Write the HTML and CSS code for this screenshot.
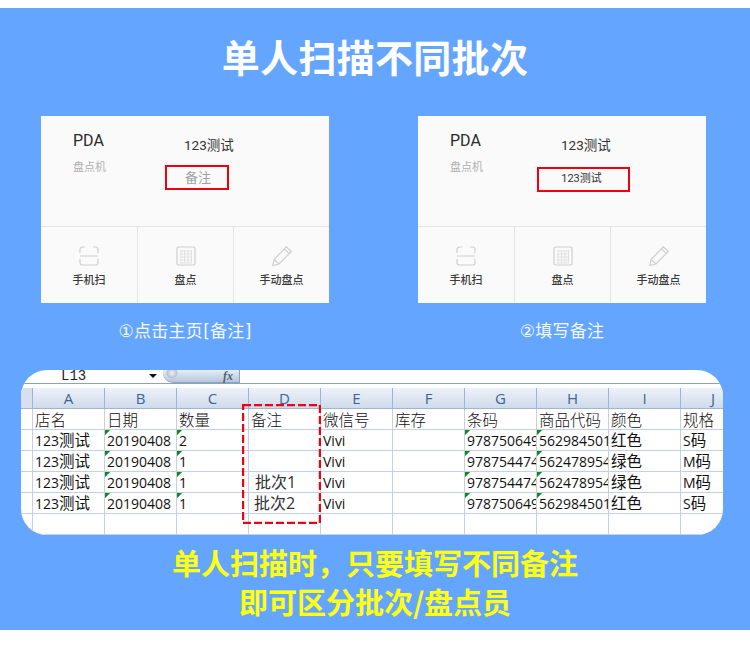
FILE: index.html
```html
<!DOCTYPE html>
<html lang="zh-CN">
<head>
<meta charset="utf-8">
<title>单人扫描不同批次</title>
<link rel="stylesheet" href="styles.css">
</head>
<body>
<main class="poster">
  <h1 class="title">单人扫描不同批次</h1>
  <div class="steps">
    <section class="step">
      <div class="card">
        <div class="card-top">
          <div class="brand"><div class="brand-name">PDA</div><div class="brand-sub">盘点机</div></div>
          <div class="info">
            <div class="store">123测试</div>
            <div class="note note-empty">备注</div>
          </div>
        </div>
        <div class="actions">
          <div class="action">
            <svg class="icon" viewBox="0 0 20 20"><path d="M1 7V3.500A2.500 2.500 0 0 1 3.500 1H6M14 1h2.500A2.500 2.500 0 0 1 19 3.500V7M1 10h18M1 13v3.500A2.500 2.500 0 0 0 3.500 19H16.500A2.500 2.500 0 0 0 19 16.500V13"/></svg>
            <span class="action-label">手机扫</span>
          </div>
          <div class="action">
            <svg class="icon" viewBox="0 0 20 20"><rect x="1" y="1" width="18" height="18" rx="1.500"/><path class="thin" d="M4 5h12M4 8h12M4 11h12M4 14h12M4 17h12M5 4v13M8.500 4v13M12 4v13M15.500 4v13"/></svg>
            <span class="action-label">盘点</span>
          </div>
          <div class="action">
            <svg class="icon" viewBox="0 0 20 20"><path d="M0.800 19.500l1.300-6L14.300 0.800l5 4.700L7 18zM2.100 13.500l4.900 4.500M12.300 2.900l5 4.700"/></svg>
            <span class="action-label">手动盘点</span>
          </div>
        </div>
      </div>
      <p class="caption">①点击主页[备注]</p>
    </section>
    <section class="step">
      <div class="card">
        <div class="card-top">
          <div class="brand"><div class="brand-name">PDA</div><div class="brand-sub">盘点机</div></div>
          <div class="info">
            <div class="store">123测试</div>
            <div class="note note-filled">123测试</div>
          </div>
        </div>
        <div class="actions">
          <div class="action">
            <svg class="icon" viewBox="0 0 20 20"><path d="M1 7V3.500A2.500 2.500 0 0 1 3.500 1H6M14 1h2.500A2.500 2.500 0 0 1 19 3.500V7M1 10h18M1 13v3.500A2.500 2.500 0 0 0 3.500 19H16.500A2.500 2.500 0 0 0 19 16.500V13"/></svg>
            <span class="action-label">手机扫</span>
          </div>
          <div class="action">
            <svg class="icon" viewBox="0 0 20 20"><rect x="1" y="1" width="18" height="18" rx="1.500"/><path class="thin" d="M4 5h12M4 8h12M4 11h12M4 14h12M4 17h12M5 4v13M8.500 4v13M12 4v13M15.500 4v13"/></svg>
            <span class="action-label">盘点</span>
          </div>
          <div class="action">
            <svg class="icon" viewBox="0 0 20 20"><path d="M0.800 19.500l1.300-6L14.300 0.800l5 4.700L7 18zM2.100 13.500l4.900 4.500M12.300 2.900l5 4.700"/></svg>
            <span class="action-label">手动盘点</span>
          </div>
        </div>
      </div>
      <p class="caption">②填写备注</p>
    </section>
  </div>

  <div class="sheet">
    <div class="formula">
      <span class="cell-name">L13</span>
      <span class="drop"></span>
      <span class="fx-btn"><i>fx</i></span>
    </div>
    <table class="grid">
      <thead>
        <tr><th class="corner"></th><th>A</th><th>B</th><th>C</th><th>D</th><th>E</th><th>F</th><th>G</th><th>H</th><th>I</th><th class="last">J</th></tr>
      </thead>
      <tbody>
        <tr class="head-row"><td class="rh"></td><td>店名</td><td>日期</td><td>数量</td><td>备注</td><td>微信号</td><td>库存</td><td>条码</td><td>商品代码</td><td>颜色</td><td>规格</td></tr>
        <tr><td class="rh"></td><td>123<span class="cjk">测试</span></td><td class="mark">20190408</td><td class="mark">2</td><td></td><td>Vivi</td><td></td><td class="mark">978750649</td><td class="mark">562984501</td><td><span class="cjk">红色</span></td><td>S<span class="cjk">码</span></td></tr>
        <tr><td class="rh"></td><td>123<span class="cjk">测试</span></td><td class="mark">20190408</td><td class="mark">1</td><td></td><td>Vivi</td><td></td><td class="mark">978754474</td><td class="mark">562478954</td><td><span class="cjk">绿色</span></td><td>M<span class="cjk">码</span></td></tr>
        <tr><td class="rh"></td><td>123<span class="cjk">测试</span></td><td class="mark">20190408</td><td class="mark">1</td><td class="batch">批次1</td><td>Vivi</td><td></td><td class="mark">978754474</td><td class="mark">562478954</td><td><span class="cjk">绿色</span></td><td>M<span class="cjk">码</span></td></tr>
        <tr><td class="rh"></td><td>123<span class="cjk">测试</span></td><td class="mark">20190408</td><td class="mark">1</td><td class="batch batch-b">批次2</td><td>Vivi</td><td></td><td class="mark">978750649</td><td class="mark">562984501</td><td><span class="cjk">红色</span></td><td>S<span class="cjk">码</span></td></tr>
        <tr><td class="rh"></td><td></td><td></td><td></td><td></td><td></td><td></td><td></td><td></td><td></td><td></td></tr>
        <tr class="short"><td class="rh"></td><td></td><td></td><td></td><td></td><td></td><td></td><td></td><td></td><td></td><td></td></tr>
      </tbody>
    </table>
    <svg class="dash" viewBox="0 0 79 120"><rect x="1" y="1" width="77" height="118"/></svg>
  </div>

  <div class="foot">
    <p>单人扫描时，只要填写不同备注</p>
    <p>即可区分批次/盘点员</p>
  </div>
</main>
</body>
</html>
```

FILE: styles.css
```css
* { box-sizing: border-box; }
html, body { margin: 0; padding: 0; background: #fff; }
body {
  padding: 8px 0 25px;
  font-family: "Noto Sans CJK SC", "Liberation Sans", sans-serif;
}
.poster {
  height: 622px;
  background: #64a6ff;
  padding-top: 22px;
  overflow: hidden;
}
.title {
  margin: 0;
  height: 52px;
  line-height: 52px;
  text-align: center;
  font-size: 38px;
  letter-spacing: 0.3px;
  font-weight: 700;
  color: #fff;
}
.steps {
  display: flex;
  gap: 89px;
  margin-top: 34px;
  padding-left: 41px;
}
.step { width: 288px; }
.card {
  height: 187px;
  background: #fafafa;
  display: flex;
  flex-direction: column;
}
.card-top {
  height: 111px;
  display: flex;
  border-bottom: 1px solid #e4e4e4;
  flex: none;
}
.brand { width: 119px; padding: 15px 0 0 32px; }
.brand-name {
  font-family: "Roboto", "Noto Sans CJK SC", sans-serif;
  font-size: 16px;
  line-height: 20px;
  color: #2a2a2a;
}
.brand-sub {
  margin-top: 7px;
  font-size: 11px;
  line-height: 16px;
  color: #b0b0b0;
}
.info { flex: 1; padding-top: 19px; }
.store {
  margin-left: 24px;
  font-size: 13.500px;
  line-height: 20px;
  color: #333;
  font-family: "Roboto", "Noto Sans CJK SC", sans-serif;
}
.note {
  border: 2px solid #f0000f;
  height: 25px;
  text-align: center;
}
.note-empty {
  margin: 10px 0 0 5px;
  width: 64px;
  font-size: 13px;
  line-height: 19px;
  color: #a0a0a0;
  padding-left: 2px;
}
.note-filled {
  margin: 12px 0 0;
  width: 93px;
  font-size: 11px;
  line-height: 19px;
  color: #333;
  font-family: "Roboto", "Noto Sans CJK SC", sans-serif;
  padding-right: 4px;
}
.actions {
  flex: 1;
  display: grid;
  grid-template-columns: 97px 96px 95px;
}
.action {
  display: flex;
  flex-direction: column;
  align-items: center;
  padding-top: 19px;
  border-right: 1px solid #e4e4e4;
}
.action:last-child { border-right: 0; }
.icon {
  width: 20px;
  height: 20px;
  fill: none;
  stroke: #cfcfcf;
  stroke-width: 1.200;
}
.icon .thin { stroke: #dcdcdc; stroke-width: 0.800; }
.action-label {
  margin-top: 5px;
  font-size: 11px;
  line-height: 16px;
  font-weight: 500;
  color: #3a3a3a;
}
.caption {
  margin: 16px 0 0;
  height: 24px;
  line-height: 24px;
  text-align: center;
  font-family: "DejaVu Sans", "Noto Sans CJK SC", sans-serif;
  font-size: 17px;
  letter-spacing: 0.3px;
  color: #f4f8ff;
}
.sheet {
  position: relative;
  margin: 27px 27px 0 21px;
  height: 165px;
  background: #fff;
  border-radius: 26px;
  overflow: hidden;
}
.formula {
  height: 14px;
  display: flex;
  align-items: flex-start;
  border-bottom: 1px solid #8ea2ba;
  margin-bottom: 4px;
}
.cell-name {
  margin-left: 40px;
  width: 88px;
  font-family: "Liberation Mono", monospace;
  font-size: 14px;
  line-height: 13px;
  color: #222;
}
.drop {
  margin-top: 4px;
  width: 0;
  height: 0;
  border-left: 4px solid transparent;
  border-right: 4px solid transparent;
  border-top: 4px solid #111;
}
.fx-btn {
  margin-left: 6px;
  width: 77px;
  height: 13px;
  background:
    radial-gradient(circle at 9px 3px, #eef1f5 0, #b9c3d0 5px, transparent 6px),
    linear-gradient(#e6edf6, #b6c7df);
  border-right: 1px solid #8ea2ba;
  border-bottom: 1px solid #8ea2ba;
  border-radius: 0 0 0 10px;
  text-align: right;
  padding-right: 6px;
  font-family: "Liberation Serif", serif;
  font-size: 12px;
  line-height: 12px;
  font-weight: 700;
  color: #55606e;
}
.grid {
  border-collapse: separate;
  border-spacing: 0;
  table-layout: fixed;
  width: 702px;
  font-family: "Open Sans", "Noto Sans CJK SC", sans-serif;
  font-size: 14px;
  color: #111;
}
.grid th {
  width: 72px;
  height: 21px;
  padding: 0;
  font-weight: 400;
  font-size: 15px;
  line-height: 19px;
  color: #3c6592;
  background: linear-gradient(#eef2f9, #cfdaea);
  border-right: 1px solid #9fb6d2;
  border-bottom: 1px solid #9fb6d2;
}
.grid th.corner { width: 12px; background: #d7e0ec; }
.grid th.last { width: 42px; border-right: 0; text-align: right; padding-right: 8px; }
.grid td {
  height: 21px;
  padding: 2px 0 0 2px;
  border-right: 1px solid #c5d0e3;
  border-bottom: 1px solid #c5d0e3;
  white-space: nowrap;
  overflow: hidden;
  line-height: 16px;
}
.grid td:last-child { border-right: 0; }
.grid td.rh { padding: 0; }
.cjk {
  font-family: "Noto Sans CJK SC", sans-serif;
  font-size: 15.500px;
  line-height: 0;
}
.grid .head-row td {
  font-size: 15.500px;
  font-family: "Noto Sans CJK SC", sans-serif;
  font-weight: 300;
  padding: 0 0 1px 2px;
}
.grid .short td { height: 18px; border-bottom: 0; }
.grid td.mark {
  background: linear-gradient(135deg, #0d8a1e 3.500px, transparent 3.600px);
}
.grid td.batch {
  padding: 0 0 0 6px;
  font-size: 16px;
  color: #333;
}
.grid td.batch-b { padding-left: 5px; }
.dash {
  position: absolute;
  left: 221px;
  top: 34px;
  width: 79px;
  height: 120px;
  fill: none;
  stroke: #f00014;
  stroke-width: 2.400;
  stroke-dasharray: 8 3;
}
.foot { margin-top: 8px; }
.foot p {
  margin: 0;
  height: 39px;
  line-height: 39px;
  text-align: center;
  font-size: 29px;
  font-weight: 700;
  color: #ffff14;
}
```
